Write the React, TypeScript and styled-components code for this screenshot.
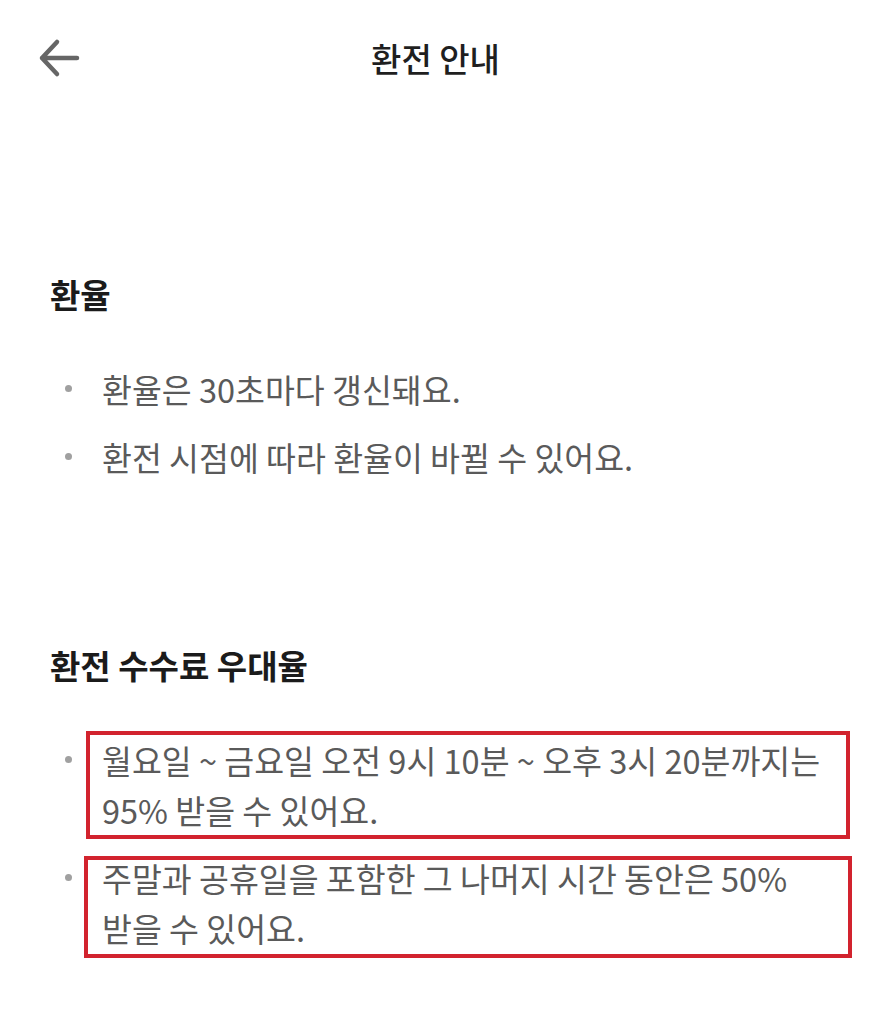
import styled, { createGlobalStyle } from "styled-components";

const GlobalStyle = createGlobalStyle`
  html, body {
    margin: 0;
    padding: 0;
    background: #ffffff;
  }
  body {
    font-family: "Noto Sans CJK KR", "Noto Sans", sans-serif;
    -webkit-font-smoothing: antialiased;
  }
`;

const Page = styled.div`
  width: 871px;
  min-height: 1024px;
  background: #ffffff;
`;

const Header = styled.header`
  display: grid;
  grid-template-columns: 1fr auto 1fr;
  align-items: center;
  height: 116px;
`;

const BackButton = styled.button`
  display: flex;
  align-items: center;
  justify-self: start;
  margin-left: 36px;
  padding: 0;
  border: none;
  background: none;
  cursor: pointer;
`;

const Title = styled.h1`
  margin: 0;
  font-size: 33px;
  font-weight: 500;
  color: #1f1f1f;
`;

const Content = styled.main`
  display: flex;
  flex-direction: column;
  gap: 162px;
  padding: 157px 30px 0 50px;
`;

const Section = styled.section`
  display: flex;
  flex-direction: column;
  gap: 49px;
`;

const Heading = styled.h2`
  margin: 0;
  font-size: 33px;
  line-height: 42px;
  font-weight: 700;
  color: #1b1b1b;
`;

const List = styled.ul`
  display: flex;
  flex-direction: column;
  gap: 18px;
  margin: 0;
  padding: 0;
  list-style: none;
`;

const Item = styled.li`
  display: flex;
  align-items: flex-start;
`;

const Dot = styled.span`
  flex: none;
  width: 7px;
  height: 7px;
  margin: 21px 30px 0 15px;
  border-radius: 50%;
  background: #a0a0a0;
`;

type Mark = { top: number; right: number; bottom: number; left: number };

const Text = styled.span<{ $mark?: Mark }>`
  position: relative;
  flex: 1;
  font-size: 32.5px;
  line-height: 50px;
  color: #5a5a5a;
  word-break: keep-all;

  ${({ $mark }) =>
    $mark
      ? `
    &::after {
      content: "";
      position: absolute;
      top: ${$mark.top}px;
      right: ${$mark.right}px;
      bottom: ${$mark.bottom}px;
      left: ${$mark.left}px;
      border: 4px solid #d2232e;
      pointer-events: none;
    }
  `
      : ""}
`;

const BackIcon = () => (
  <svg width="48" height="48" viewBox="0 0 48 48" fill="none">
    <path
      d="M6 24H41M21 8L6 24L21 40"
      stroke="#666666"
      strokeWidth="4.5"
      strokeLinecap="round"
      strokeLinejoin="round"
    />
  </svg>
);

const sections: { title: string; items: { text: string; mark?: Mark }[] }[] = [
  {
    title: "환율",
    items: [
      { text: "환율은 30초마다 갱신돼요." },
      { text: "환전 시점에 따라 환율이 바뀔 수 있어요." },
    ],
  },
  {
    title: "환전 수수료 우대율",
    items: [
      {
        text: "월요일 ~ 금요일 오전 9시 10분 ~ 오후 3시 20분까지는 95% 받을 수 있어요.",
        mark: { top: -4, right: -9, bottom: -4, left: -16 },
      },
      {
        text: "주말과 공휴일을 포함한 그 나머지 시간 동안은 50% 받을 수 있어요.",
        mark: { top: 3, right: -11, bottom: -5, left: -18 },
      },
    ],
  },
];

export default function App() {
  return (
    <Page>
      <GlobalStyle />
      <Header>
        <BackButton aria-label="뒤로">
          <BackIcon />
        </BackButton>
        <Title>환전 안내</Title>
        <span />
      </Header>
      <Content>
        {sections.map((section) => (
          <Section key={section.title}>
            <Heading>{section.title}</Heading>
            <List>
              {section.items.map((item) => (
                <Item key={item.text}>
                  <Dot />
                  <Text $mark={item.mark}>{item.text}</Text>
                </Item>
              ))}
            </List>
          </Section>
        ))}
      </Content>
    </Page>
  );
}
